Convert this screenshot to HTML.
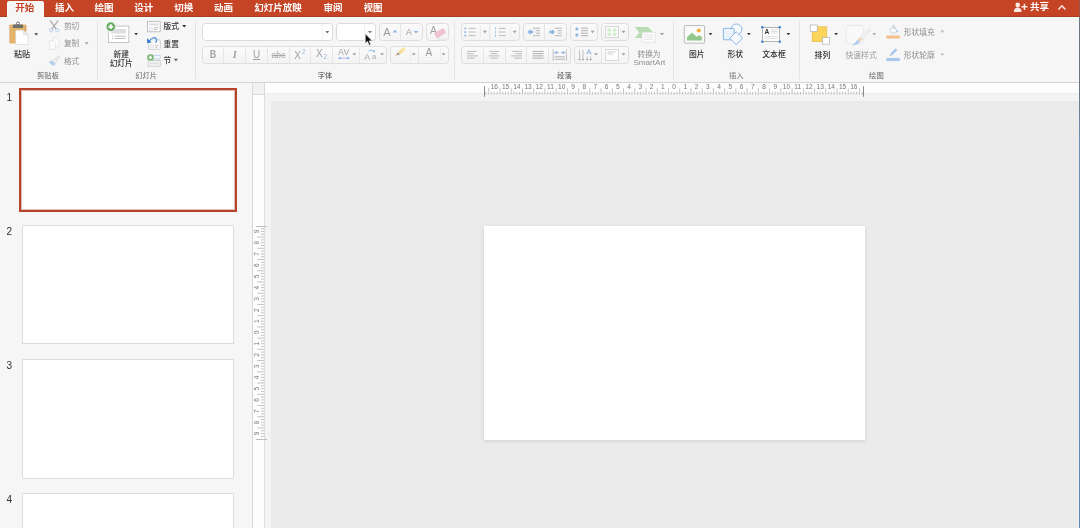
<!DOCTYPE html>
<html lang="zh-CN">
<head>
<meta charset="utf-8">
<title>PowerPoint</title>
<style>
*{box-sizing:border-box;margin:0;padding:0}
html,body{width:1080px;height:528px;overflow:hidden;background:#f5f5f5;font-family:"Liberation Sans","Noto Sans CJK SC",sans-serif;}
#app{will-change:transform;position:relative;width:1080px;height:528px;overflow:hidden;background:#f5f5f5}
.abs{position:absolute}
.t{position:absolute;white-space:nowrap;transform:translateX(-50%);line-height:10px;height:10px;font-size:7.7px;color:#333}
.t.l{line-height:12px;height:12px}
.g{color:#8f8f8f}
.lab{color:#666;font-size:7.3px}
#tabs{position:absolute;left:0;top:0;width:1080px;height:16.6px;background:#c44425;border-bottom:0.7px solid #a8401f}
.tab{position:absolute;top:8px;transform:translate(-50%,-50%);color:#fff;font-weight:700;font-size:9.5px;line-height:1;white-space:nowrap}
#tabact{position:absolute;left:6.8px;top:1px;width:37px;height:16px;background:#f6f6f6;border-radius:2px 2px 0 0}
#ribbon{position:absolute;left:0;top:16.6px;width:1080px;height:66.2px;background:#f6f6f6;border-bottom:1px solid #d4d4d4}
.sep{position:absolute;top:21px;width:1px;height:58px;background:#e4e4e4}
.box{position:absolute;border:1px solid #dedede;border-radius:3.5px;background:linear-gradient(#fafafa,#f4f4f4)}
.wbox{position:absolute;border:1px solid #dadada;border-radius:3.5px;background:#fff}
.vd{position:absolute;top:0;bottom:0;width:1px;background:#e6e6e6}
#left{position:absolute;left:0;top:83px;width:253px;height:445px;background:#f6f6f6}
.thumb{position:absolute;left:22px;width:212px;height:119px;background:#fff;border:1px solid #dcdcdc}
.num{position:absolute;left:6.4px;font-size:10px;color:#2e2e2e;line-height:1;transform:translate(0,-50%)}
#work{position:absolute;left:253px;top:83px;width:827px;height:445px;background:#f4f4f4}
#canvas{position:absolute;left:271px;top:101px;width:809px;height:427px;background:#ebebeb;box-shadow:0 0 1.5px .5px #efefef}
#hr{position:absolute;left:265px;top:83px;width:815px;height:11.3px;background:#fdfdfd;border-bottom:1px solid #ededed}
#vr{position:absolute;left:252px;top:94px;width:13px;height:434px;background:#fdfdfd;border-left:1px solid #d6d6d6;border-right:1px solid #dedede}
#corner{position:absolute;left:252px;top:83px;width:13px;height:11.6px;background:#f1f1f1;border:1px solid #d9d9d9;border-top:none}
#slide{position:absolute;left:484.4px;top:226.3px;width:380.2px;height:213.4px;background:#fff;box-shadow:0 1px 4px rgba(0,0,0,.12)}
svg{position:absolute;left:0;top:0;overflow:visible}
svg text{font-family:"Liberation Sans","Noto Sans CJK SC",sans-serif}
</style>
</head>
<body>
<div id="app">
<!-- TABS -->
<div id="tabs">
 <div id="tabact"></div>
 <div class="tab" style="left:24.7px;color:#c44425">开始</div>
 <div class="tab" style="left:64.6px">插入</div>
 <div class="tab" style="left:103.9px">绘图</div>
 <div class="tab" style="left:143.8px">设计</div>
 <div class="tab" style="left:183.8px">切换</div>
 <div class="tab" style="left:223.4px">动画</div>
 <div class="tab" style="left:278px">幻灯片放映</div>
 <div class="tab" style="left:333px">审阅</div>
 <div class="tab" style="left:373px">视图</div>
 <div class="tab" style="left:1039.5px;top:7px">共享</div>
</div>
<!-- RIBBON -->
<div id="ribbon"></div>
<!-- separators -->
<div class="sep" style="left:97.2px"></div>
<div class="sep" style="left:195px"></div>
<div class="sep" style="left:454.3px"></div>
<div class="sep" style="left:673.2px"></div>
<div class="sep" style="left:799.3px"></div>

<!-- ===== Clipboard ===== -->

<!-- ===== Slides ===== -->

<!-- ===== Font ===== -->
<div class="wbox" style="left:202px;top:23px;width:131px;height:18px"><div class="vd" style="left:119px;background:#f0f0f0"></div></div>
<div class="wbox" style="left:336px;top:23px;width:40px;height:18px"><div class="vd" style="left:27px;background:#f0f0f0"></div></div>
<div class="box" style="left:379px;top:23px;width:44px;height:18px"><div class="vd" style="left:20px"></div></div>
<div class="box" style="left:426px;top:23px;width:23px;height:18px"></div>
<div class="box" style="left:202px;top:46px;width:185px;height:18px"><div class="vd" style="left:20px"></div><div class="vd" style="left:42px"></div><div class="vd" style="left:64px"></div><div class="vd" style="left:86px"></div><div class="vd" style="left:107px"></div><div class="vd" style="left:129px"></div><div class="vd" style="left:156px"></div></div>
<div class="box" style="left:390px;top:46px;width:59px;height:18px"><div class="vd" style="left:19px;background:#ececec;top:2px;bottom:2px"></div><div class="vd" style="left:27px"></div><div class="vd" style="left:49px;background:#ececec;top:2px;bottom:2px"></div></div>
<!-- ===== Paragraph ===== -->
<div class="box" style="left:461px;top:23px;width:59px;height:18px"><div class="vd" style="left:18px;background:#ececec;top:2px;bottom:2px"></div><div class="vd" style="left:27px"></div><div class="vd" style="left:48px;background:#ececec;top:2px;bottom:2px"></div></div>
<div class="box" style="left:523px;top:23px;width:44px;height:18px"><div class="vd" style="left:20px"></div></div>
<div class="box" style="left:570px;top:23px;width:28px;height:18px"></div>
<div class="box" style="left:601px;top:23px;width:28px;height:18px"></div>
<div class="box" style="left:461px;top:46px;width:110px;height:18px"><div class="vd" style="left:21px"></div><div class="vd" style="left:43px"></div><div class="vd" style="left:64px"></div><div class="vd" style="left:86px"></div></div>
<div class="box" style="left:574px;top:46px;width:55px;height:18px"><div class="vd" style="left:26px"></div></div>
<div class="t" style="left:22px;top:50px;font-size:8px;font-weight:500">粘贴</div>
<div class="t" style="left:71.6px;top:22px;color:#8f8f8f">剪切</div>
<div class="t" style="left:71.6px;top:39px;color:#8f8f8f">复制</div>
<div class="t" style="left:71.6px;top:57px;color:#8f8f8f">格式</div>
<div class="t" style="left:48px;top:71px;color:#666;font-size:7.3px">剪贴板</div>
<div class="t" style="left:121.2px;top:50px;font-weight:500;">新建</div>
<div class="t" style="left:121.2px;top:59px;font-weight:500;">幻灯片</div>
<div class="t" style="left:171.3px;top:22px;font-weight:500;">版式</div>
<div class="t" style="left:171.3px;top:40px;font-weight:500;">重置</div>
<div class="t" style="left:167.4px;top:56px;font-weight:500;">节</div>
<div class="t" style="left:146.1px;top:71px;color:#666;font-size:7.3px">幻灯片</div>
<div class="t" style="left:325px;top:71px;color:#444;font-size:7.3px">字体</div>
<div class="t" style="left:564.4px;top:71px;color:#555;font-size:7.3px">段落</div>
<div class="t" style="left:736.2px;top:71px;color:#777;font-size:7.3px">插入</div>
<div class="t" style="left:876.4px;top:71px;color:#666;font-size:7.3px">绘图</div>
<div class="t" style="left:649px;top:50px;color:#8f8f8f">转换为</div>
<div class="t" style="left:696.8px;top:50px;font-size:7.8px;font-weight:500;">图片</div>
<div class="t" style="left:735.3px;top:50px;font-size:7.8px;font-weight:500;">形状</div>
<div class="t" style="left:774px;top:50px;font-size:7.8px;font-weight:500;">文本框</div>
<div class="t" style="left:822.4px;top:51px;font-size:7.8px;font-weight:500;">排列</div>
<div class="t" style="left:861.1px;top:51px;font-size:7.8px;color:#999">快速样式</div>
<div class="t" style="left:919.3px;top:28px;font-size:7.8px;color:#8f8f8f">形状填充</div>
<div class="t" style="left:919.3px;top:51px;font-size:7.8px;color:#8f8f8f">形状轮廓</div>
<div class="t l" style="left:649.4px;top:57px;font-size:8.1px;color:#8f8f8f">SmartArt</div>
<div class="t l" style="left:213px;top:49px;font-size:10.4px;font-weight:700;color:#a6a6a6;transform:translateX(-50%) scaleX(.86)">B</div>
<div class="t l" style="left:234.7px;top:49px;font-size:10.5px;font-style:italic;color:#a0a0a0;font-family:'Liberation Serif',serif;font-weight:700">I</div>
<div class="t l" style="left:256.6px;top:49px;font-size:10px;color:#a0a0a0;text-decoration:underline">U</div>
<div class="t l" style="left:278.5px;top:49px;font-size:8.6px;color:#a6a6a6;text-decoration:line-through">abc</div>
<div class="t l" style="left:297.6px;top:50px;font-size:10px;color:#a0a0a0">X</div>
<div class="t l" style="left:303.8px;top:46px;font-size:6.4px;color:#9dbbe0">2</div>
<div class="t l" style="left:319.3px;top:48px;font-size:10px;color:#a0a0a0">X</div>
<div class="t l" style="left:325.4px;top:51px;font-size:6.4px;color:#9dbbe0">2</div>
<div class="t l" style="left:343.8px;top:46px;font-size:8.8px;color:#a3a3a3;letter-spacing:.2px">AV</div>
<div class="t l" style="left:367.2px;top:51px;font-size:8.6px;color:#a3a3a3">A</div>
<div class="t l" style="left:374px;top:51px;font-size:7.6px;color:#a8a8a8">a</div>
<div class="t l" style="left:386.8px;top:26px;font-size:11px;color:#9a9a9a">A</div>
<div class="t l" style="left:409.1px;top:26px;font-size:9.6px;color:#9a9a9a;transform:translateX(-50%) scaleX(.92)">A</div>
<div class="t l" style="left:433.4px;top:24px;font-size:10.5px;color:#a5a5a5">A</div>
<div class="t l" style="left:429px;top:47px;font-size:10.2px;color:#9c9c9c">A</div>
<svg width="1080" height="83" viewBox="0 0 1080 83">
<!-- dropdown arrows: dark -->
<g fill="#2f2f2f">
<path d="M34.4 33.2h3.6l-1.8 2.3z"/>
<path d="M134.3 33.0h3.6l-1.8 2.3z"/>
<path d="M182.2 24.9h4l-2 2.5z"/>
<path d="M173.9 58.8h4l-2 2.5z" fill="#555"/>
<path d="M708.7 33.0h3.6l-1.8 2.3z"/>
<path d="M747.1 33.0h3.6l-1.8 2.3z"/>
<path d="M786.6 33.0h3.6l-1.8 2.3z"/>
<path d="M834.3 33.0h3.6l-1.8 2.3z"/>
</g>
<!-- dropdown arrows: gray -->
<g fill="#9c9c9c">
<path d="M84.8 42.2h3.8l-1.9 2.4z"/>
<path d="M325.3 31h4l-2 2.6z" fill="#777"/>
<path d="M368 31h4l-2 2.6z" fill="#777"/>
<path d="M352.4 53.2h3.8l-1.9 2.4z"/>
<path d="M380.2 53.2h3.8l-1.9 2.4z"/>
<path d="M411.9 53.2h3.8l-1.9 2.4z"/>
<path d="M441.7 53.2h3.8l-1.9 2.4z"/>
<path d="M483 30.8h3.8l-1.9 2.4z"/>
<path d="M512.8 30.8h3.8l-1.9 2.4z"/>
<path d="M590.8 30.8h3.8l-1.9 2.4z"/>
<path d="M621.6 30.8h3.8l-1.9 2.4z"/>
<path d="M594 53.2h3.8l-1.9 2.4z"/>
<path d="M621.6 53.2h3.8l-1.9 2.4z"/>
<path d="M660 33h4l-2 2.5z"/>
<path d="M872.4 33h3.8l-1.9 2.4z" fill="#b0b0b0"/>
<path d="M940.5 30.5h3.8l-1.9 2.4z" fill="#b8b8b8"/>
<path d="M940.5 53.4h3.8l-1.9 2.4z" fill="#b8b8b8"/>
</g>

<!-- Paste clipboard -->
<g>
<rect x="9.6" y="24.6" width="16.6" height="18.8" rx="1" fill="#e3b466"/>
<path d="M9.9 25v18" stroke="#dc9a72" stroke-width=".6"/>
<path d="M25.9 25v6" stroke="#cf8a66" stroke-width=".6"/>
<circle cx="18" cy="23.500" r="1.500" fill="none" stroke="#6f6f6f" stroke-width="1"/>
<path d="M12.900 27.900v-2.300c0-.7.500-1.100 1.100-1.100h8c.6 0 1.100.4 1.100 1.100v2.300z" fill="#6f6f6f"/>
<path d="M15.600 30.200h7.800l4.700 4.500v9.800h-12.500z" fill="#fff" stroke="#cdcdcd" stroke-width=".5"/>
<path d="M23.400 30.200v4.500h4.700z" fill="#eeeeee" stroke="#cdcdcd" stroke-width=".4"/>
</g>

<!-- Scissors (gray) -->
<g fill="none" stroke-linecap="round">
<path d="M50.400 20.800l5.900 8.400M57.800 20.800l-5.900 8.400" stroke="#ababab" stroke-width="1.200"/>
<circle cx="51" cy="30.200" r="1.700" stroke="#bcd4ee" stroke-width="1"/>
<circle cx="57.200" cy="30.200" r="1.700" stroke="#bcd4ee" stroke-width="1"/>
</g>
<!-- Copy (very light) -->
<g fill="#fbfbfb" stroke="#dedede" stroke-width=".7">
<path d="M53 37.800h3.600l2.400 2.400v6.400h-6z"/>
<path d="M49.600 40.600h3.600l2.400 2.400v6.400h-6z"/>
</g>
<!-- Format painter brush -->
<g>
<path d="M58.900 55.500l1.400 1.400-3.700 4-1.700-1.700z" fill="#e4e4e4" stroke="#d4d4d4" stroke-width=".4"/>
<path d="M54.500 58.600l2.900 2.900-1.900 1.900-2.900-2.900z" fill="#efefef" stroke="#d4d4d4" stroke-width=".4"/>
<path d="M52.200 60.500l3.400 3.400-2.200 2c-1.600-.4-3.800-2.400-4.600-4.100z" fill="#b7cfec"/>
</g>

<!-- New slide -->
<g>
<rect x="108.500" y="26.100" width="20.300" height="16.400" fill="#fff" stroke="#b9b9b9" stroke-width=".8"/>
<rect x="111.600" y="29.300" width="14" height="3.800" fill="#dedfe3" stroke="#cfd0d4" stroke-width=".4"/>
<path d="M112 36.200h1M114.700 36.200h10.900M112 38.500h1M114.700 38.500h10.900" stroke="#adadad" stroke-width=".8"/>
<circle cx="110.800" cy="26.700" r="4.600" fill="#62ab5c"/>
<circle cx="110.800" cy="26.700" r="4.700" fill="none" stroke="#f6f6f6" stroke-width=".6"/>
<path d="M110.800 24.300v4.800M108.400 26.700h4.800" stroke="#fff" stroke-width="1.900"/>
</g>
<!-- Layout -->
<g>
<rect x="147.400" y="21.600" width="12.800" height="10.200" fill="#fdfdfd" stroke="#b5b5b5" stroke-width=".8"/>
<rect x="149.200" y="23.400" width="9.200" height="2" fill="#dcdcdc"/>
<rect x="149.200" y="27.200" width="3.200" height="3" fill="#eef3fa" stroke="#c3d3e8" stroke-width=".4"/>
<path d="M154 27.800h4.400M154 29.600h3" stroke="#9f9f9f" stroke-width=".7"/>
</g>
<!-- Reset -->
<g>
<rect x="148.400" y="39.800" width="11.900" height="9.500" rx=".8" fill="#fbfbfb" stroke="#c6c6c6" stroke-width=".8"/>
<rect x="150.200" y="44.800" width="3.400" height="2.800" fill="#f4f4f4" stroke="#cdcdcd" stroke-width=".4"/>
<path d="M155.200 45.600h3.200M155.200 47.300h2.200" stroke="#a8a8a8" stroke-width=".7"/>
<path d="M149.600 40.800c1.900-2.600 4.600-4 6.400-2.400 1.600 1.400.6 3.200-.7 4.200" fill="none" stroke="#f6f6f6" stroke-width="2.600"/>
<path d="M149.600 40.800c1.900-2.600 4.600-4 6.400-2.400 1.600 1.400.6 3.200-.7 4.200" fill="none" stroke="#4a8ed8" stroke-width="1.300"/>
<path d="M147.100 38.300v4.800l4.600-.6z" fill="#2f74c8"/>
</g>
<!-- Section -->
<g>
<rect x="150.400" y="55.400" width="9.800" height="3.600" rx=".8" fill="#f4f8fd" stroke="#a8c4e6" stroke-width=".7"/>
<rect x="148.200" y="60.600" width="12" height="5.600" fill="#f1f1f1" stroke="#c6c6c6" stroke-width=".7"/>
<path d="M150 63.400h8.400" stroke="#d4d4d4" stroke-width=".8"/>
<circle cx="150.500" cy="57.400" r="3.500" fill="#62ab5c"/>
<circle cx="150.500" cy="57.400" r="3.500" fill="none" stroke="#f6f6f6" stroke-width=".5"/>
<path d="M150.500 55.500v3.800M148.600 57.400h3.800" stroke="#fff" stroke-width="1.500"/>
</g>

<!-- Font grow/shrink arrows -->
<path d="M392.600 32.400l2.400-2.600 2.400 2.600z" fill="#8db5e4"/>
<path d="M413.600 31l2.400 2.600 2.400-2.600z" fill="#8db5e4"/>
<!-- Clear format eraser -->
<g transform="rotate(-32 440 33)">
<rect x="434.800" y="30.600" width="10.400" height="5.200" rx="1" fill="#f0c3ce" stroke="#e6b3c0" stroke-width=".4"/>
</g>
<path d="M437.600 39h8" stroke="#d9d9d9" stroke-width=".6"/>
<!-- AV arrow -->
<path d="M339.600 58.200h8.600" stroke="#8fb4e2" stroke-width=".8"/>
<path d="M338 58.200l2.400-1.600v3.200zM349.800 58.200l-2.400-1.600v3.200z" fill="#8fb4e2"/>
<!-- Aa arrow -->
<path d="M368.400 51.400c1.400-1.600 3.600-1.600 4.800-.2" fill="none" stroke="#8fb4e2" stroke-width=".9"/>
<path d="M371.800 50.200h3v2.800z" fill="#8fb4e2"/>
<!-- Highlighter -->
<g>
<path d="M400.200 49.400l3.200-2.600 2.600 3.200-3.400 2.600z" fill="#f7e6a8"/>
<path d="M397.800 52.400l2.400-3 2.400 3.200-2.800 1.600z" fill="#f4dc96"/>
<path d="M396.600 54l1.200-1.600 2 1.800-1.600 1z" fill="#8a8a8a"/>
<path d="M394.800 56.200l1.800-2.200 1.600 1.200z" fill="#efc79a"/>
<rect x="393.400" y="58.400" width="11.800" height="1.800" fill="#fdfdfd" stroke="#e6e6e6" stroke-width=".4"/>
</g>
<!-- Font color bar -->
<rect x="423.200" y="58.400" width="11.600" height="1.800" fill="#fdfdfd" stroke="#e6e6e6" stroke-width=".4"/>

<!-- Bullets -->
<g>
<path d="M468.600 28.400h6.800M468.600 32h6.800M468.600 35.600h6.800" stroke="#b3b3b3" stroke-width=".9"/>
<path d="M464.400 27.600h1.700v1.700h-1.700zM464.400 31.200h1.700v1.700h-1.700zM464.400 34.800h1.700v1.700h-1.700z" fill="#8fb4e2"/>
</g>
<!-- Numbering -->
<g>
<path d="M498.800 28.400h6.800M498.800 32h6.800M498.800 35.600h6.800" stroke="#b3b3b3" stroke-width=".9"/>
<path d="M495.600 27.200v2.200M495.600 30.900v2.200M495.600 34.600v2.200" stroke="#8fb4e2" stroke-width=".9"/>
</g>
<!-- Outdent -->
<g>
<path d="M533 28.200h7M535.600 30.700h4.400M535.600 33.200h4.400M533 35.700h7" stroke="#b0b0b0" stroke-width=".9"/>
<path d="M527.400 32l3.200-3v1.800h2.600v2.400h-2.600v1.800z" fill="#8db5e4"/>
</g>
<!-- Indent -->
<g>
<path d="M554.800 28.200h7M557.400 30.700h4.400M557.400 33.200h4.400M554.800 35.700h7" stroke="#b0b0b0" stroke-width=".9"/>
<path d="M555 32l-3.200-3v1.800h-2.600v2.400h2.600v1.800z" fill="#8db5e4"/>
</g>
<!-- Line spacing -->
<g>
<path d="M581 28.200h7M581 30.700h7M581 33.200h7M581 35.700h7" stroke="#a8a8a8" stroke-width=".9"/>
<path d="M576.800 27l2.300 2.600h-1.500v1h-1.600v-1h-1.500zM576.800 37l2.300-2.600h-1.500v-1h-1.600v1h-1.500z" fill="#8db5e4"/>
</g>
<!-- Columns -->
<g>
<rect x="605.500" y="26.500" width="13" height="11" fill="#fcfcfc" stroke="#c6c6c6" stroke-width=".7"/>
<path d="M607.400 28.600h3.600v3h-3.600zM612.800 28.600h3.600v3h-3.600zM607.400 32.800h3.600v3h-3.600zM612.800 32.800h3.600v3h-3.600z" fill="#d2edce"/>
</g>
<!-- Align left/center/right/justify -->
<g stroke="#b3b3b3" stroke-width=".9">
<path d="M467 51.400h9.600M467 53.650h6.600M467 55.900h11M467 58.150h7.600"/>
<path d="M489.400 51.400h9.600M491 53.650h6.400M488.800 55.900h10.800M490.400 58.150h7.600"/>
<path d="M512.400 51.400h9.600M515.400 53.650h6.600M511 55.900h11M514.400 58.150h7.600"/>
<path d="M532.600 51.400h11M532.600 53.650h11M532.600 55.900h11M532.600 58.150h11" stroke="#a8a8a8"/>
</g>
<!-- Distributed -->
<g>
<path d="M553.200 49.400v11.600M566.400 49.400v11.600" stroke="#b0b0b0" stroke-width=".8"/>
<path d="M555.800 52.600h8" stroke="#8db5e4" stroke-width=".9" stroke-dasharray="3 2"/>
<path d="M554.200 52.600l2.600-1.800v3.600zM565.400 52.600l-2.600-1.800v3.600z" fill="#8db5e4"/>
<path d="M554.800 56.800h10M554.800 59.200h10" stroke="#a8a8a8" stroke-width=".9"/>
</g>
<!-- Text direction -->
<g>
<path d="M579.600 49.600v10M583 49.600v10" stroke="#b0b0b0" stroke-width=".8"/>
<path d="M578.200 59l1.400 1.800 1.400-1.800zM581.600 59l1.400 1.800 1.400-1.800z" fill="#a5a5a5"/>
<path d="M587.200 56.400v3.200M590.600 56.400v3.200" stroke="#b0b0b0" stroke-width=".8"/>
<path d="M585.800 59l1.400 1.800 1.400-1.800zM589.200 59l1.400 1.800 1.400-1.800z" fill="#a5a5a5"/>
<path d="M586.600 54.400l2.300-5 2.300 5M587.400 52.800h3" fill="none" stroke="#8fb4e2" stroke-width=".9"/>
</g>
<!-- Align text -->
<g>
<rect x="605.500" y="49.500" width="13" height="11" fill="#fcfcfc" stroke="#cacaca" stroke-width=".7"/>
<path d="M607.400 52h8M607.400 54h5.400" stroke="#c4c4c4" stroke-width=".8"/>
</g>
<!-- SmartArt -->
<g>
<path d="M634.800 27.100h13.200l5.300 5.400-5.300 5.400h-13.200l4.600-5.400z" fill="#b7dcb2"/>
<rect x="642" y="32.200" width="13.200" height="10" fill="#fbfbfb" stroke="#dcdcdc" stroke-width=".6"/>
<path d="M644.200 35h8.800M644.200 37.200h8.800M644.200 39.400h8.800" stroke="#dcdcdc" stroke-width=".7"/>
</g>

<!-- Picture -->
<g>
<rect x="684.300" y="25.600" width="20.300" height="17.600" rx=".8" fill="#fafafa" stroke="#b3b3b3" stroke-width=".9"/>
<path d="M687 40.400v-3.200l4.800-4.400 5 3.900 2.200-1.500 2.800 1.200v4z" fill="#92c88d"/>
<circle cx="698.800" cy="30.500" r="2.100" fill="#f2b33d"/>
</g>
<!-- Shapes -->
<g stroke="#74a6dc" stroke-width=".8">
<circle cx="736.500" cy="29.400" r="5.400" fill="#f7fafe"/>
<rect x="723.400" y="28.400" width="10.800" height="11.400" rx=".6" fill="#eaf2fb"/>
<path d="M736.200 31.800l6.600 6.400-6.600 6.400-6.600-6.400z" fill="#f4f8fd"/>
</g>
<!-- Text box -->
<g>
<rect x="762.500" y="27.500" width="17" height="14" fill="#fdfdfd" stroke="#a2a2a2" stroke-width=".8"/>
<path d="M771.300 29.900h6.400M771.300 31.500h6.400M771.300 33.100h6.400M764.600 36.600h13.100M764.600 38.500h13.100" stroke="#cdcdcd" stroke-width=".6"/>
<g fill="#3c7fd0"><circle cx="762.300" cy="27.300" r="1.200"/><circle cx="779.700" cy="27.300" r="1.200"/><circle cx="762.300" cy="41.700" r="1.200"/><circle cx="779.700" cy="41.700" r="1.200"/></g>
</g>
<text x="766.900" y="34" font-size="6.600" font-weight="700" fill="#333" text-anchor="middle">A</text>

<!-- Arrange -->
<g>
<rect x="812.200" y="26.800" width="14.600" height="14.600" fill="#fbd45c" stroke="#e7b93f" stroke-width=".7"/>
<rect x="810.200" y="25" width="7" height="6.600" fill="#fff" stroke="#b1b1b1" stroke-width=".7"/>
<rect x="822.500" y="37.500" width="7" height="6.600" fill="#fff" stroke="#b1b1b1" stroke-width=".7"/>
</g>
<!-- Quick styles -->
<g>
<rect x="846.200" y="25.400" width="17.400" height="18" rx="3.200" fill="#f9f9f9" stroke="#e3e3e3" stroke-width=".8"/>
<path d="M869.800 28.800l.9.900-8.200 9.800-2.400-2.400z" fill="#f1f1f1" stroke="#d9d9d9" stroke-width=".5"/>
<path d="M860.100 37.100l2.400 2.400-2.500 2.600-2.600-2.500z" fill="#ecd9ba"/>
<path d="M857.400 39.600l2.600 2.500c-1.300 2.100-4.600 3.700-8.200 3.500 2.200-1.100 3.800-3.400 5.600-6z" fill="#b3cdee"/>
</g>
<!-- Shape fill -->
<g>
<path d="M889.600 29.600l4.600-2.600 2.900 4.400-4.700 2.500z" fill="#fafafa" stroke="#b9c3d0" stroke-width=".7"/>
<path d="M892.600 28v-1.800c0-1.300 2-1.300 2 0v3.200" fill="none" stroke="#b9c3d0" stroke-width=".7"/>
<path d="M897.100 29.600c.9 1.100 1.300 2 .7 2.700-.6.500-1.500 0-1.300-.9z" fill="#a9c7ec"/>
<rect x="886.400" y="35.500" width="13.400" height="3.100" fill="#f3c08c"/>
</g>
<!-- Shape outline -->
<g>
<path d="M895.600 48.200l1.800 1.800-5.400 5.500-1.800-1.800z" fill="#a9c7ec"/>
<path d="M890.200 53.700l1.800 1.800-2.700 1z" fill="#c9c9c9"/>
<rect x="886.400" y="58" width="13.400" height="3.100" fill="#a9c7ec"/>
</g>

<!-- Share icon + chevron -->
<g fill="#fbe9e3">
<circle cx="1017.700" cy="4.900" r="2.300"/>
<path d="M1013.800 12c0-3 1.600-4.500 3.900-4.500s3.900 1.500 3.900 4.500z"/>
<path d="M1023.700 3.800h1.500v2.300h2.300v1.500h-2.300v2.300h-1.500v-2.300h-2.300v-1.500h2.300z"/>
</g>
<path d="M1058.400 9.500l3.500-3.700 3.500 3.700" fill="none" stroke="#fbe9e3" stroke-width="1.500"/>

<!-- Mouse cursor -->
<path d="M365.200 33.600v10l2.300-2.100 1.700 3.900 1.700-.8-1.700-3.700h3.200z" fill="#111" stroke="#fff" stroke-width=".7" stroke-linejoin="round"/>

</svg>

<!-- LEFT PANEL -->
<div id="left"></div>
<div class="abs" style="left:19.3px;top:88px;width:217.6px;height:124.2px;border:2.3px solid #b5432a;background:#fff;box-shadow:inset 0 0 0 1px #dfbfb6"></div>
<div class="thumb" style="top:225px"></div>
<div class="thumb" style="top:359px;height:120px"></div>
<div class="thumb" style="top:493px"></div>
<div class="num" style="top:98px">1</div>
<div class="num" style="top:232.2px">2</div>
<div class="num" style="top:366.4px">3</div>
<div class="num" style="top:500.2px">4</div>
<!-- WORK -->
<div id="work"></div>
<div id="canvas"></div>
<div id="hr"></div>
<div id="vr"></div>
<div id="corner"></div>
<svg width="1080" height="528" viewBox="0 0 1080 528" font-size="6.6" fill="#787878">
<path d="M485.91 91.8V94.6M488.72 88.2V94.6M491.53 91.8V94.6M494.34 91.8V94.6M497.15 91.8V94.6M499.96 88.2V94.6M502.77 91.8V94.6M505.58 91.8V94.6M508.38 91.8V94.6M511.19 88.2V94.6M514.00 91.8V94.6M516.81 91.8V94.6M519.62 91.8V94.6M522.43 88.2V94.6M525.24 91.8V94.6M528.05 91.8V94.6M530.85 91.8V94.6M533.66 88.2V94.6M536.47 91.8V94.6M539.28 91.8V94.6M542.09 91.8V94.6M544.90 88.2V94.6M547.71 91.8V94.6M550.51 91.8V94.6M553.32 91.8V94.6M556.13 88.2V94.6M558.94 91.8V94.6M561.75 91.8V94.6M564.56 91.8V94.6M567.37 88.2V94.6M570.18 91.8V94.6M572.99 91.8V94.6M575.79 91.8V94.6M578.60 88.2V94.6M581.41 91.8V94.6M584.22 91.8V94.6M587.03 91.8V94.6M589.84 88.2V94.6M592.65 91.8V94.6M595.46 91.8V94.6M598.26 91.8V94.6M601.07 88.2V94.6M603.88 91.8V94.6M606.69 91.8V94.6M609.50 91.8V94.6M612.31 88.2V94.6M615.12 91.8V94.6M617.93 91.8V94.6M620.73 91.8V94.6M623.54 88.2V94.6M626.35 91.8V94.6M629.16 91.8V94.6M631.97 91.8V94.6M634.78 88.2V94.6M637.59 91.8V94.6M640.39 91.8V94.6M643.20 91.8V94.6M646.01 88.2V94.6M648.82 91.8V94.6M651.63 91.8V94.6M654.44 91.8V94.6M657.25 88.2V94.6M660.06 91.8V94.6M662.87 91.8V94.6M665.67 91.8V94.6M668.48 88.2V94.6M671.29 91.8V94.6M674.10 91.8V94.6M676.91 91.8V94.6M679.72 88.2V94.6M682.53 91.8V94.6M685.34 91.8V94.6M688.14 91.8V94.6M690.95 88.2V94.6M693.76 91.8V94.6M696.57 91.8V94.6M699.38 91.8V94.6M702.19 88.2V94.6M705.00 91.8V94.6M707.81 91.8V94.6M710.61 91.8V94.6M713.42 88.2V94.6M716.23 91.8V94.6M719.04 91.8V94.6M721.85 91.8V94.6M724.66 88.2V94.6M727.47 91.8V94.6M730.27 91.8V94.6M733.08 91.8V94.6M735.89 88.2V94.6M738.70 91.8V94.6M741.51 91.8V94.6M744.32 91.8V94.6M747.13 88.2V94.6M749.94 91.8V94.6M752.75 91.8V94.6M755.55 91.8V94.6M758.36 88.2V94.6M761.17 91.8V94.6M763.98 91.8V94.6M766.79 91.8V94.6M769.60 88.2V94.6M772.41 91.8V94.6M775.22 91.8V94.6M778.02 91.8V94.6M780.83 88.2V94.6M783.64 91.8V94.6M786.45 91.8V94.6M789.26 91.8V94.6M792.07 88.2V94.6M794.88 91.8V94.6M797.69 91.8V94.6M800.49 91.8V94.6M803.30 88.2V94.6M806.11 91.8V94.6M808.92 91.8V94.6M811.73 91.8V94.6M814.54 88.2V94.6M817.35 91.8V94.6M820.15 91.8V94.6M822.96 91.8V94.6M825.77 88.2V94.6M828.58 91.8V94.6M831.39 91.8V94.6M834.20 91.8V94.6M837.01 88.2V94.6M839.82 91.8V94.6M842.62 91.8V94.6M845.43 91.8V94.6M848.24 88.2V94.6M851.05 91.8V94.6M853.86 91.8V94.6M856.67 91.8V94.6M859.48 88.2V94.6M862.29 91.8V94.6" stroke="#9e9e9e" stroke-width="0.6" fill="none"/>
<path d="M484.50 86.3V96.8" stroke="#8a8a8a" stroke-width="1"/>
<path d="M863.50 86.3V96.8" stroke="#8a8a8a" stroke-width="1"/>
<text x="494.34" y="89.3" text-anchor="middle">16</text>
<text x="505.58" y="89.3" text-anchor="middle">15</text>
<text x="516.81" y="89.3" text-anchor="middle">14</text>
<text x="528.05" y="89.3" text-anchor="middle">13</text>
<text x="539.28" y="89.3" text-anchor="middle">12</text>
<text x="550.51" y="89.3" text-anchor="middle">11</text>
<text x="561.75" y="89.3" text-anchor="middle">10</text>
<text x="572.99" y="89.3" text-anchor="middle">9</text>
<text x="584.22" y="89.3" text-anchor="middle">8</text>
<text x="595.46" y="89.3" text-anchor="middle">7</text>
<text x="606.69" y="89.3" text-anchor="middle">6</text>
<text x="617.93" y="89.3" text-anchor="middle">5</text>
<text x="629.16" y="89.3" text-anchor="middle">4</text>
<text x="640.39" y="89.3" text-anchor="middle">3</text>
<text x="651.63" y="89.3" text-anchor="middle">2</text>
<text x="662.87" y="89.3" text-anchor="middle">1</text>
<text x="674.10" y="89.3" text-anchor="middle">0</text>
<text x="685.34" y="89.3" text-anchor="middle">1</text>
<text x="696.57" y="89.3" text-anchor="middle">2</text>
<text x="707.81" y="89.3" text-anchor="middle">3</text>
<text x="719.04" y="89.3" text-anchor="middle">4</text>
<text x="730.27" y="89.3" text-anchor="middle">5</text>
<text x="741.51" y="89.3" text-anchor="middle">6</text>
<text x="752.75" y="89.3" text-anchor="middle">7</text>
<text x="763.98" y="89.3" text-anchor="middle">8</text>
<text x="775.22" y="89.3" text-anchor="middle">9</text>
<text x="786.45" y="89.3" text-anchor="middle">10</text>
<text x="797.69" y="89.3" text-anchor="middle">11</text>
<text x="808.92" y="89.3" text-anchor="middle">12</text>
<text x="820.15" y="89.3" text-anchor="middle">13</text>
<text x="831.39" y="89.3" text-anchor="middle">14</text>
<text x="842.62" y="89.3" text-anchor="middle">15</text>
<text x="853.86" y="89.3" text-anchor="middle">16</text>
<path d="M261 228.67H264.2M261 231.48H264.2M261 234.28H264.2M257.2 237.09H264.2M261 239.89H264.2M261 242.70H264.2M261 245.51H264.2M257.2 248.31H264.2M261 251.12H264.2M261 253.93H264.2M261 256.73H264.2M257.2 259.54H264.2M261 262.34H264.2M261 265.15H264.2M261 267.96H264.2M257.2 270.76H264.2M261 273.57H264.2M261 276.38H264.2M261 279.18H264.2M257.2 281.99H264.2M261 284.79H264.2M261 287.60H264.2M261 290.41H264.2M257.2 293.21H264.2M261 296.02H264.2M261 298.82H264.2M261 301.63H264.2M257.2 304.44H264.2M261 307.24H264.2M261 310.05H264.2M261 312.86H264.2M257.2 315.66H264.2M261 318.47H264.2M261 321.27H264.2M261 324.08H264.2M257.2 326.89H264.2M261 329.69H264.2M261 332.50H264.2M261 335.31H264.2M257.2 338.11H264.2M261 340.92H264.2M261 343.73H264.2M261 346.53H264.2M257.2 349.34H264.2M261 352.14H264.2M261 354.95H264.2M261 357.76H264.2M257.2 360.56H264.2M261 363.37H264.2M261 366.18H264.2M261 368.98H264.2M257.2 371.79H264.2M261 374.59H264.2M261 377.40H264.2M261 380.21H264.2M257.2 383.01H264.2M261 385.82H264.2M261 388.62H264.2M261 391.43H264.2M257.2 394.24H264.2M261 397.04H264.2M261 399.85H264.2M261 402.66H264.2M257.2 405.46H264.2M261 408.27H264.2M261 411.07H264.2M261 413.88H264.2M257.2 416.69H264.2M261 419.49H264.2M261 422.30H264.2M261 425.11H264.2M257.2 427.91H264.2M261 430.72H264.2M261 433.52H264.2M261 436.33H264.2" stroke="#9e9e9e" stroke-width="0.6" fill="none"/>
<path d="M256 226.50H267" stroke="#bdbdbd" stroke-width="1"/>
<path d="M256 439.50H267" stroke="#bdbdbd" stroke-width="1"/>
<text transform="translate(259 231.48) rotate(-90)" text-anchor="middle">9</text>
<text transform="translate(259 242.70) rotate(-90)" text-anchor="middle">8</text>
<text transform="translate(259 253.93) rotate(-90)" text-anchor="middle">7</text>
<text transform="translate(259 265.15) rotate(-90)" text-anchor="middle">6</text>
<text transform="translate(259 276.38) rotate(-90)" text-anchor="middle">5</text>
<text transform="translate(259 287.60) rotate(-90)" text-anchor="middle">4</text>
<text transform="translate(259 298.82) rotate(-90)" text-anchor="middle">3</text>
<text transform="translate(259 310.05) rotate(-90)" text-anchor="middle">2</text>
<text transform="translate(259 321.27) rotate(-90)" text-anchor="middle">1</text>
<text transform="translate(259 332.50) rotate(-90)" text-anchor="middle">0</text>
<text transform="translate(259 343.73) rotate(-90)" text-anchor="middle">1</text>
<text transform="translate(259 354.95) rotate(-90)" text-anchor="middle">2</text>
<text transform="translate(259 366.18) rotate(-90)" text-anchor="middle">3</text>
<text transform="translate(259 377.40) rotate(-90)" text-anchor="middle">4</text>
<text transform="translate(259 388.62) rotate(-90)" text-anchor="middle">5</text>
<text transform="translate(259 399.85) rotate(-90)" text-anchor="middle">6</text>
<text transform="translate(259 411.07) rotate(-90)" text-anchor="middle">7</text>
<text transform="translate(259 422.30) rotate(-90)" text-anchor="middle">8</text>
<text transform="translate(259 433.52) rotate(-90)" text-anchor="middle">9</text>
</svg>
<div id="slide"></div>
<div class="abs" style="left:1078.6px;top:0;width:1.4px;height:528px;background:linear-gradient(#9b5645 0,#9b5645 16.5px,#6e7782 16.6px,#6e7782 86px,#6d8fb4 146px,#5f88b2 100%)"></div>
</div>
</body>
</html>
